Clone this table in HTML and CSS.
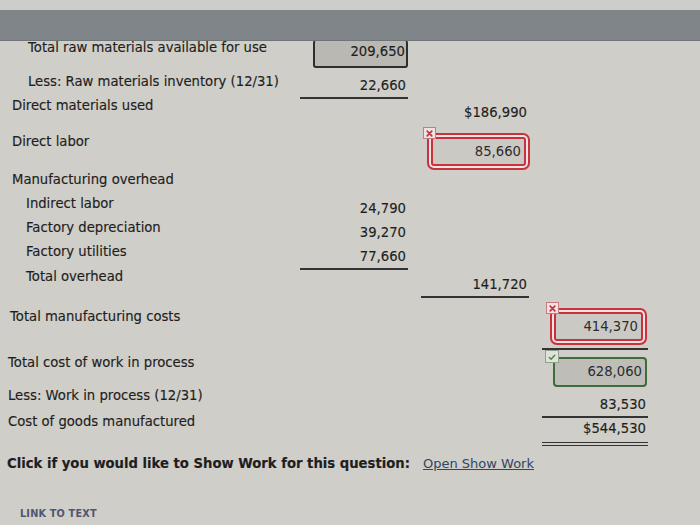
FILE: index.html
```html
<!DOCTYPE html>
<html>
<head>
<meta charset="utf-8">
<link rel="stylesheet" href="styles.css">
</head>
<body>
<div class="topstrip"></div>
<div class="bar"></div>
<main class="sheet">
  <div class="row h34">
    <div class="label in28">Total raw materials available for use</div>
    <div class="c1"><div class="field grey">209,650</div></div>
  </div>
  <div class="row h24">
    <div class="label in28">Less: Raw materials inventory (12/31)</div>
    <div class="c1 num p4 under">22,660</div>
  </div>
  <div class="row h36">
    <div class="label in12">Direct materials used</div>
    <div class="c2 num p7">$186,990</div>
  </div>
  <div class="row h38">
    <div class="label in12">Direct labor</div>
    <div class="c2"><div class="field wrong w95">85,660<span class="badge bad"><svg viewBox="0 0 12 11" width="12" height="11"><path d="M3.5 3 L8.5 8 M8.5 3 L3.5 8" stroke="#c4303c" stroke-width="1.8" stroke-linecap="round"/></svg></span></div></div>
  </div>
  <div class="row h24">
    <div class="label in12">Manufacturing overhead</div>
  </div>
  <div class="row h24">
    <div class="label in26">Indirect labor</div>
    <div class="c1 num p5">24,790</div>
  </div>
  <div class="row h24">
    <div class="label in26">Factory depreciation</div>
    <div class="c1 num p5">39,270</div>
  </div>
  <div class="row h25">
    <div class="label in26">Factory utilities</div>
    <div class="c1 num p5 under">77,660</div>
  </div>
  <div class="row h40">
    <div class="label in26">Total overhead</div>
    <div class="c2 num p8 under u3">141,720</div>
  </div>
  <div class="row h46">
    <div class="label in10">Total manufacturing costs</div>
    <div class="c3 under u8"><div class="field wrong w89">414,370<span class="badge bad"><svg viewBox="0 0 12 11" width="12" height="11"><path d="M3.5 3 L8.5 8 M8.5 3 L3.5 8" stroke="#c4303c" stroke-width="1.8" stroke-linecap="round"/></svg></span></div></div>
  </div>
  <div class="row h33">
    <div class="label in8">Total cost of work in process</div>
    <div class="c3"><div class="field right">628,060<span class="badge good"><svg viewBox="0 0 13 12" width="13" height="12"><path d="M3.5 6.5 L5.5 8.3 L9.5 4.2" stroke="#4f8a48" stroke-width="1.6" fill="none" stroke-linecap="round" stroke-linejoin="round"/></svg></span></div></div>
  </div>
  <div class="row h26">
    <div class="label in8">Less: Work in process (12/31)</div>
    <div class="c3 num p9 under">83,530</div>
  </div>
  <div class="row h42">
    <div class="label in8">Cost of goods manufactured</div>
    <div class="c3 num p7 double">$544,530</div>
  </div>
  <div class="row h49">
    <div class="label in7 strong wide">Click if you would like to Show Work for this question:</div>
    <div class="c2 linkcell"><a class="showwork" href="#">Open Show Work</a></div>
  </div>
  <div class="row h20">
    <div class="label in20"><span class="textlink">LINK TO TEXT</span></div>
  </div>
</main>
</body>
</html>
```

FILE: styles.css
```css
html, body {
  margin: 0;
  padding: 0;
}
body {
  width: 700px;
  height: 525px;
  overflow: hidden;
  background: #d0cec8;
  font-family: "DejaVu Sans", Verdana, sans-serif;
  font-size: 13.2px;
  color: #1e1e1e;
  -webkit-text-stroke: 0.15px #1e1e1e;
}
.topstrip {
  height: 10px;
  background: #cdcdcb;
}
.bar {
  position: relative;
  z-index: 2;
  height: 30px;
  background: #7f8588;
  border-bottom: 1px solid #6f7476;
  margin-bottom: -1px;
}
.sheet {
  display: block;
}
.row {
  display: grid;
  grid-template-columns: 287px 108px 108px 106px;
  column-gap: 13px;
  align-items: start;
  line-height: 16px;
}
.h20 { height: 20px; }
.h24 { height: 24px; }
.h25 { height: 25px; }
.h26 { height: 26px; }
.h33 { height: 33px; }
.h34 { height: 34px; }
.h36 { height: 36px; }
.h38 { height: 38px; }
.h40 { height: 40px; }
.h42 { height: 42px; }
.h46 { height: 46px; }
.h49 { height: 49px; }

.label {
  grid-column: 1;
  white-space: nowrap;
}
.label.wide { grid-column: 1 / 3; }
.in7 { padding-left: 7px; }
.in8 { padding-left: 8px; }
.in10 { padding-left: 10px; }
.in12 { padding-left: 12px; }
.in20 { padding-left: 20px; }
.in26 { padding-left: 26px; }
.in28 { padding-left: 28px; }
.strong { font-weight: bold; }

.c1 { grid-column: 2; }
.c2 { grid-column: 3; }
.c3 { grid-column: 4; }
.num {
  text-align: right;
  padding-right: 2px;
}
.p4 { padding-top: 4px; }
.p5 { padding-top: 5px; }
.p7 { padding-top: 7px; }
.p8 { padding-top: 8px; }
.p9 { padding-top: 9px; }
.under {
  border-bottom: 2px solid #333;
  padding-bottom: 3px;
}
.under.u3 { padding-bottom: 3px; }
.under.u8 { padding-bottom: 7px; }
.double {
  border-bottom: 4px double #333;
  padding-bottom: 5px;
}

.field {
  position: relative;
  text-align: right;
  border-radius: 3px;
}
.field.grey {
  margin-left: 13px;
  background: #b9b8b3;
  border: 2px solid #2e2e2e;
  border-top: 0;
  padding: 4px 1px 6px 3px;
}
.field.wrong {
  margin-left: auto;
  margin-top: 3px;
  background: #cbc9c3;
  border: 2px solid #c7323d;
  box-shadow: 0 0 0 2px #efe2e2, 0 0 0 4px #c7323d;
  border-radius: 3px;
  padding: 5px 3px 4px 3px;
  color: #2c2c2c;
  -webkit-text-stroke: 0;
}
.w95 { width: 85px; margin-right: 3px; }
.w89 { width: 79px; margin-right: 5px; }
.field.right {
  margin-left: 11px;
  margin-right: 1px;
  margin-top: 2px;
  background: #bebdb8;
  border: 2px solid #3e6c3a;
  border-radius: 4px;
  padding: 5px 3px 5px 3px;
  color: #2c2c2c;
  -webkit-text-stroke: 0;
}
.badge {
  position: absolute;
  display: flex;
  align-items: center;
  justify-content: center;
  box-sizing: border-box;
}
.badge.bad {
  left: -10px;
  top: -12px;
  width: 13px;
  height: 12px;
  background: #f3e1e1;
  border: 1px solid #c47b82;
}
.badge.good {
  left: -10px;
  top: -9px;
  width: 14px;
  height: 13px;
  background: #dfe4da;
  border: 1px solid #93a08e;
}
.linkcell {
  white-space: nowrap;
  padding-left: 2px;
}
.showwork {
  color: #2f4763;
  -webkit-text-stroke: 0;
  text-decoration: underline;
  font-size: 13px;
}
.textlink {
  font-size: 9.7px;
  font-weight: bold;
  color: #4f5670;
  -webkit-text-stroke: 0;
  letter-spacing: 0.2px;
}
```
